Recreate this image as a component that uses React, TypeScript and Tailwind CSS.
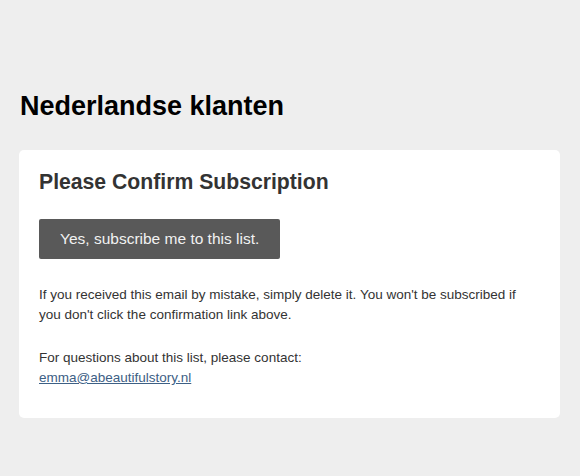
export default function App() {
  return (
    <div className="min-h-[476px] w-[580px] bg-[#eeeeee] pt-[86px] px-[19px] font-['Liberation_Sans',Arial,sans-serif]">
      <h1 className="text-[27px] leading-[40px] font-bold text-black pl-[1px]">Nederlandse klanten</h1>
      <div className="mt-[24px] bg-white rounded-[5px] px-[20px] pt-[19px] pb-[30px] w-[541px]">
        <h2 className="text-[21.2px] leading-[26px] font-bold text-[#333333]">Please Confirm Subscription</h2>
        <div className="mt-[24px]">
          <button className="h-[40px] px-[21px] bg-[#595959] text-[#f2f2f2] text-[15.5px] rounded-[2px]">Yes, subscribe me to this list.</button>
        </div>
        <p className="mt-[26px] text-[13.5px] leading-[20px] text-[#333333]">
          If you received this email by mistake, simply delete it. You won't be subscribed if you don't click the confirmation link above.
        </p>
        <p className="mt-[23px] text-[13.5px] leading-[20px] text-[#333333]">
          For questions about this list, please contact:
          <br />
          <a href="#" className="text-[#3d6085] underline">emma@abeautifulstory.nl</a>
        </p>
      </div>
    </div>
  );
}
